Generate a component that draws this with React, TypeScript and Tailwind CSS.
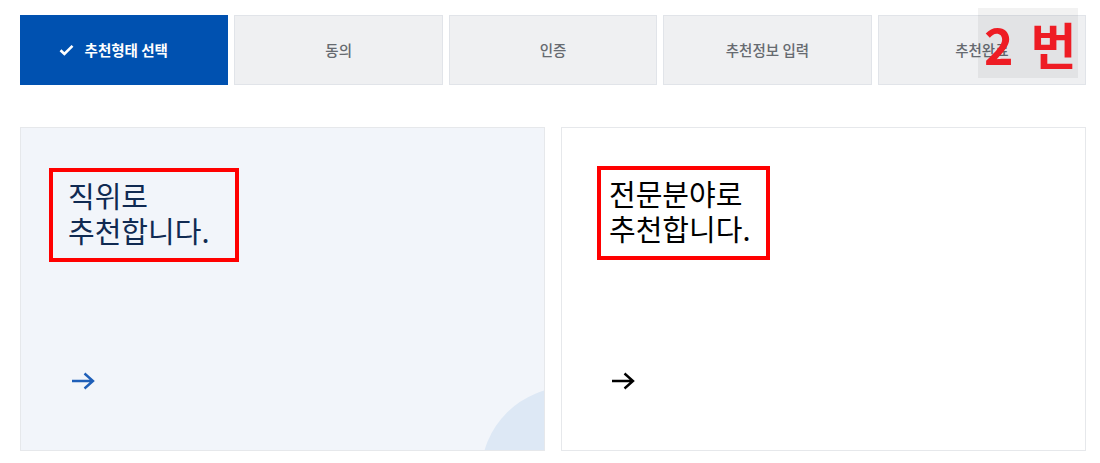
import React from "react";

const font = { fontFamily: '"Noto Sans CJK KR", "Noto Sans", sans-serif' };

function Arrow({ color }: { color: string }) {
  return (
    <svg width="26" height="20" viewBox="0 0 26 20" fill="none">
      <path d="M2 10H23M14.5 2.5L23 10L14.5 17.5" stroke={color} strokeWidth="2.4" strokeLinecap="butt" strokeLinejoin="miter" />
    </svg>
  );
}

export default function App() {
  const tabs = ["동의", "인증", "추천정보 입력", "추천완료"];
  return (
    <div className="w-[1100px] h-[463px] bg-white relative overflow-hidden" style={font}>
      <div className="flex gap-[6px] pl-[20px] pr-[14px] pt-[15px]">
        <div className="w-[209px] h-[70px] bg-[#0051b0] flex items-center justify-center gap-[11px] pr-[22px] text-white text-[14.5px] font-bold">
          <svg width="15" height="12" viewBox="0 0 15 12" fill="none">
            <path d="M1.5 6.2L5.4 10L13.5 1.8" stroke="white" strokeWidth="2.6" />
          </svg>
          <span>추천형태 선택</span>
        </div>
        {tabs.map((t) => (
          <div key={t} className="w-[209px] h-[70px] bg-[#eff0f2] border border-[#e1e4e9] flex items-center justify-center text-[14.5px] font-medium text-[#666a70]">
            {t}
          </div>
        ))}
      </div>
      <div className="flex gap-[16px] pl-[20px] pr-[14px] mt-[42px]">
        <div className="relative w-[526px] h-[324px] bg-[#f2f5fa] border border-[#e6e8eb] overflow-hidden">
          <div className="absolute right-[-113px] bottom-[-113px] w-[176px] h-[176px] rounded-full bg-[#dde8f5]" />
          <div className="relative ml-[28px] mt-[40px] inline-block border-[4px] border-[#ff0000] pl-[15px] pr-[26px] pt-[6px] pb-[10px]">
            <p className="text-[29px] leading-[35px] text-[#102a52]">직위로<br />추천합니다.</p>
          </div>
          <div className="absolute left-[49px] top-[243px]">
            <Arrow color="#1f5fb8" />
          </div>
        </div>
        <div className="relative w-[526px] h-[324px] bg-white border border-[#e6e8eb]">
          <div className="relative ml-[35px] mt-[38px] inline-block border-[4px] border-[#ff0000] pl-[8px] pr-[16px] pt-[6px] pb-[10px]">
            <p className="text-[29px] leading-[35px] text-black">전문분야로<br />추천합니다.</p>
          </div>
          <div className="absolute left-[48px] top-[243px]">
            <Arrow color="#000000" />
          </div>
        </div>
      </div>
      <div className="absolute left-[978px] top-[8px] w-[100px] h-[70px] bg-[rgba(0,0,0,0.05)] flex items-center gap-[17px] pl-[6px] text-[#ee1c24] text-[50px] font-bold leading-none" style={{ fontFamily: '"Noto Sans CJK KR", sans-serif' }}>
        <span>2</span>
        <span>번</span>
      </div>
    </div>
  );
}
